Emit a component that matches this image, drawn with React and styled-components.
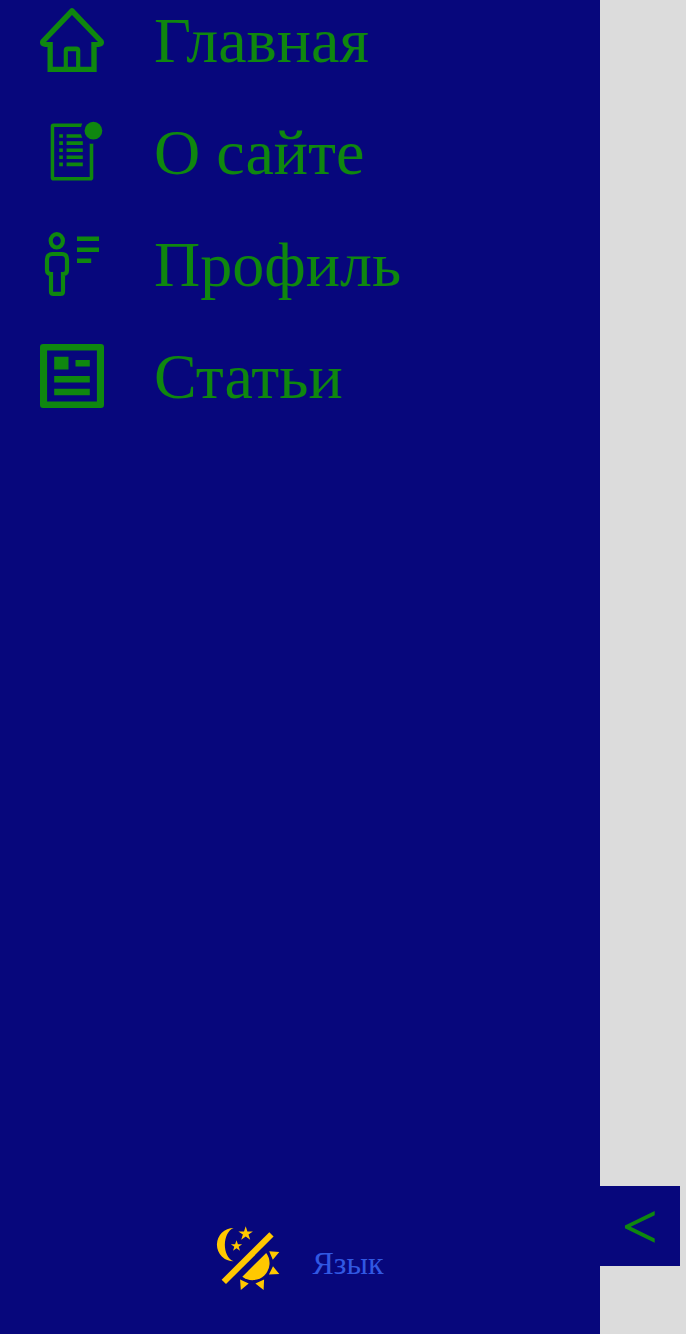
import React from "react";
import styled, { createGlobalStyle } from "styled-components";

const GlobalStyle = createGlobalStyle`
  * { box-sizing: border-box; }
  body {
    margin: 0;
    background: #dcdcdc;
    font-family: "Liberation Serif", "Times New Roman", serif;
  }
`;

const Page = styled.div`
  display: flex;
  align-items: flex-end;
  height: 1334px;
  overflow: hidden;
`;

const Sidebar = styled.aside`
  display: flex;
  flex-direction: column;
  justify-content: space-between;
  flex: none;
  width: 600px;
  height: 100%;
  padding: 8px 0 44px;
  background: #07077c;
`;

const Menu = styled.nav`
  display: flex;
  flex-direction: column;
  gap: 48px;
  padding-left: 40px;
`;

const MenuLink = styled.a`
  display: flex;
  align-items: center;
  gap: 50px;
  height: 64px;
  color: #0f870f;
  font-size: 64px;
  line-height: 66px;
  white-space: nowrap;
`;

const MenuLabel = styled.span`
  padding-top: 2px;
`;

const Icon = styled.svg`
  display: block;
  flex: none;
  width: 64px;
  height: 64px;
  fill: ${(p) => p.$color || "#0f870f"};
`;

const Footer = styled.footer`
  display: flex;
  justify-content: center;
  gap: 32px;
`;

const LangButton = styled.button`
  border: 0;
  padding: 10px 0 0;
  background: none;
  color: #3158e2;
  font: inherit;
  font-size: 32px;
  line-height: 36px;
`;

const CollapseButton = styled.button`
  flex: none;
  width: 80px;
  height: 80px;
  margin-bottom: 68px;
  border: 0;
  padding: 2px 0 0;
  background: #07077c;
  color: #0f870f;
  font: inherit;
  font-size: 64px;
  font-weight: 700;
  line-height: 78px;
`;

const HomeIcon = () => (
  <Icon viewBox="0 0 64 64">
    <path
      fillRule="evenodd"
      d="M30.2 .8Q32 -.7 33.8 .8L63.2 31.7Q65 34.4 63 37.2Q61.500 39 56.700 39V64H7.500V39Q2.500 39 1 37.2Q-1 34.400 .8 31.700ZM32 6.900L6 34H12.800V58.700H23.700V42.500Q23.700 38.500 27.700 38.500H36.300Q40.300 38.500 40.300 42.500V58.700H51.300V34H58ZM27.900 43.200V58.700H36.100V43.200Z"
    />
  </Icon>
);

const AboutIcon = () => (
  <Icon viewBox="0 0 64 64">
    <path d="M42.300 3.400H13.500Q10.700 3.400 10.700 6.200V57.800Q10.700 60.600 13.500 60.600H50.500Q53.300 60.600 53.300 57.800V23.500Q51.500 24 49.700 23.500V57H14.200V7H41.100Q41.400 5 42.300 3.400Z" />
    <circle cx="53.400" cy="10.700" r="8.900" />
    <path d="M19.200 14.200h3.700v3.600h-3.700zM19.200 21.300h3.700v3.600h-3.700zM19.200 28.400h3.700v3.600h-3.700zM19.200 35.500h3.700v3.600h-3.700zM19.200 42.600h3.700v3.600h-3.700z" />
    <path d="M26.600 14.200H41Q41.500 16.200 42.300 17.800H26.600zM26.600 21.300h16.200v3.600H26.600zM26.600 28.400h16.200v3.600H26.600zM26.600 35.500h16.200v3.600H26.600zM26.600 42.600h16.200v3.600H26.600z" />
  </Icon>
);

const ProfileIcon = () => (
  <Icon viewBox="0 0 64 64">
    <g fill="none" stroke="#0f870f" strokeWidth="4.2">
      <ellipse cx="16.800" cy="8.800" rx="6.100" ry="6.700" />
      <path d="M11 42V59.500Q11 61.900 13.500 61.900H20.500Q23 61.900 23 59.500V42Q27 42 27 38V27.500Q27 22 21.500 22H12.500Q7 22 7 27.500V38Q7 42 11 42Z" />
    </g>
    <path d="M37 4.500H59V8.900H37zM37 15.500H59V19.900H37zM37 26.500H51.200V30.900H37z" />
  </Icon>
);

const ArticlesIcon = () => (
  <Icon viewBox="0 0 64 64">
    <path
      fillRule="evenodd"
      d="M3 0H61Q64 0 64 3V61Q64 64 61 64H3Q0 64 0 61V3Q0 0 3 0ZM7.100 6.400V57.600H56.900V6.400Z"
    />
    <path d="M14.200 12.800H28.500V25.600H14.200zM35.500 16H49.800V22.400H35.500zM14.200 32H49.800V38.400H14.200zM14.200 44.800H49.800V51.200H14.200z" />
  </Icon>
);

const ThemeIcon = () => (
  <Icon viewBox="0 0 64 64" $color="#ffc800">
    <path d="M17.600 1.900A16.700 16.700 0 0 0 17.600 35.300C6 30.500 6 6.700 17.600 1.900Z" />
    <path d="M29.700 .3L31.400 5.400H36.900L32.500 8.600L34.200 13.700L29.700 10.600L25.200 13.700L26.900 8.600L22.400 5.400H28Z" />
    <path d="M20.500 14.200L21.900 18.200H26.100L22.700 20.700L24 24.800L20.500 22.300L17 24.800L18.300 20.700L14.900 18.200H19.100Z" />
    <path d="M53.300 6.300L57.600 10.600L10 58L5.600 53.700Z" />
    <path d="M50.200 27A17 17 0 0 1 26.300 50.700Z" />
    <path d="M53.200 25.200L63.300 25.900L56.800 33.700ZM57 40.300L63.300 48.100L52.900 48.600ZM24.100 53.600L32.700 57.500L24.800 63.900ZM48.100 53.600L47.600 63.900L39.400 57.400Z" />
  </Icon>
);

const items = [
  { label: "Главная", Glyph: HomeIcon },
  { label: "О сайте", Glyph: AboutIcon },
  { label: "Профиль", Glyph: ProfileIcon },
  { label: "Статьи", Glyph: ArticlesIcon },
];

export default function App() {
  return (
    <>
      <GlobalStyle />
      <Page>
        <Sidebar>
          <Menu>
            {items.map(({ label, Glyph }) => (
              <MenuLink key={label}>
                <Glyph />
                <MenuLabel>{label}</MenuLabel>
              </MenuLink>
            ))}
          </Menu>
          <Footer>
            <ThemeIcon />
            <LangButton>Язык</LangButton>
          </Footer>
        </Sidebar>
        <CollapseButton>&lt;</CollapseButton>
      </Page>
    </>
  );
}
